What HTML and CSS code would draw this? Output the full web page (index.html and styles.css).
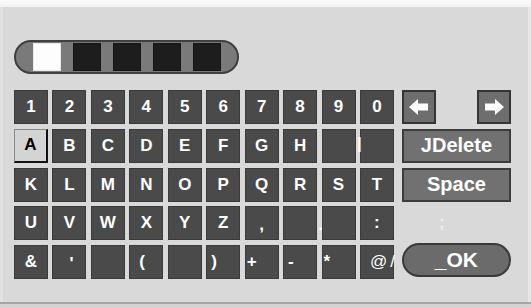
FILE: index.html
```html
<!DOCTYPE html>
<html>
<head>
<meta charset="utf-8">
<link rel="stylesheet" href="styles.css">
</head>
<body>
<div class="screen">
  <div class="topstrip"></div>
  <div class="middle">
    <div class="panel">
      <div class="progress">
        <span class="sq on"></span><span class="sq"></span><span class="sq"></span><span class="sq"></span><span class="sq"></span>
      </div>
      <div class="board">
        <div class="keys">
          <div class="key">1</div><div class="key">2</div><div class="key">3</div><div class="key">4</div><div class="key">5</div><div class="key">6</div><div class="key">7</div><div class="key">8</div><div class="key">9</div><div class="key">0</div>
          <div class="key sel">A</div><div class="key">B</div><div class="key">C</div><div class="key">D</div><div class="key">E</div><div class="key">F</div><div class="key">G</div><div class="key">H</div><div class="key"></div><div class="key start"><span class="bar">|</span></div>
          <div class="key">K</div><div class="key">L</div><div class="key">M</div><div class="key">N</div><div class="key">O</div><div class="key">P</div><div class="key">Q</div><div class="key">R</div><div class="key">S</div><div class="key">T</div>
          <div class="key">U</div><div class="key">V</div><div class="key">W</div><div class="key">X</div><div class="key">Y</div><div class="key">Z</div><div class="key low">,</div><div class="key end"><span class="dot">.</span></div><div class="key"></div><div class="key">:</div>
          <div class="key">&amp;</div><div class="key apos">'</div><div class="key"></div><div class="key start"><span class="p9">(</span></div><div class="key"></div><div class="key start"><span class="p5">)</span></div><div class="key start"><span class="p1">+</span></div><div class="key start"><span class="p5">-</span></div><div class="key start top"><span class="p1">*</span></div><div class="key start"><span class="p10">@/</span></div>
        </div>
        <div class="side">
          <div class="arrows">
            <div class="akey"><svg width="20" height="16" viewBox="0 0 20 16"><polygon points="0,8 9,0 9,4.5 19,4.5 19,11.5 9,11.5 9,16" fill="#fff"/></svg></div>
            <div class="akey"><svg width="20" height="16" viewBox="0 0 20 16"><polygon points="20,8 11,0 11,4.5 1,4.5 1,11.5 11,11.5 11,16" fill="#fff"/></svg></div>
          </div>
          <div class="wide">JDelete</div>
          <div class="wide">Space</div>
          <div class="faint">;</div>
          <div class="ok">_OK</div>
        </div>
      </div>
    </div>
    <div class="edge"></div>
  </div>
  <div class="bottom"></div>
</div>
</body>
</html>
```

FILE: styles.css
```css
html, body {
  margin: 0;
  padding: 0;
}
body {
  width: 531px;
  height: 307px;
  overflow: hidden;
  background: #d6d6d6;
  font-family: "Liberation Sans", Arial, sans-serif;
}
.screen {
  width: 531px;
  height: 307px;
  display: flex;
  flex-direction: column;
}
.topstrip {
  height: 7px;
  background: linear-gradient(#fbfbfb, #f2f2f2);
  flex: none;
}
.middle {
  height: 295px;
  display: flex;
  flex: none;
}
.panel {
  width: 517px;
  background: #d9d9d9;
  border-left: 3px solid #e1e1e1;
  padding-left: 11px;
  padding-top: 33px;
  box-sizing: content-box;
}
.edge {
  flex: 1;
  border-left: 3px solid #e7e7e7;
  background: linear-gradient(90deg, #c2c2c2 0, #c2c2c2 40%, #a2a2a2 60%, #9a9a9a 100%);
}
.bottom {
  flex: 1;
  border-top: 2px solid #a6a6a6;
  background: #d3d3d3;
}
.progress {
  width: 225px;
  height: 34px;
  box-sizing: border-box;
  border: 2px solid #3f3f3f;
  border-radius: 17px;
  background: #7a7a7a;
  display: flex;
  align-items: center;
  padding-left: 17px;
  gap: 12px;
}
.sq {
  width: 28px;
  height: 28px;
  box-sizing: border-box;
  background: #1d1d1d;
  border: 1px solid #151515;
}
.sq.on {
  background: #fdfdfd;
  border-color: #e8e8e8;
}
.board {
  margin-top: 16px;
  display: flex;
}
.keys {
  display: grid;
  grid-template-columns: repeat(10, 34px);
  grid-auto-rows: 34px;
  column-gap: 4.44px;
  row-gap: 4.75px;
}
.key {
  box-sizing: border-box;
  background: #4a4a4a;
  border: 1px solid #3a3a3a;
  color: #fff;
  font-weight: bold;
  font-size: 17px;
  display: flex;
  align-items: center;
  justify-content: center;
  white-space: nowrap;
}
.key.sel {
  background: #d4d4d4;
  color: #000;
  border-top: 1px solid #8a8a8a;
  border-left: 1px solid #8a8a8a;
  border-right: 2px solid #111;
  border-bottom: 2px solid #111;
}
.key.start {
  justify-content: flex-start;
}
.key.end {
  justify-content: flex-end;
}
.key.low {
  align-items: flex-end;
  padding-bottom: 4px;
}
.key.top {
  align-items: flex-start;
  padding-top: 6px;
}
.key.apos {
  padding-left: 4px;
  align-items: flex-start;
  padding-top: 8px;
}
.bar {
  margin-left: -4px;
  margin-top: -3px;
}
.dot {
  margin-right: -7px;
  margin-top: 4px;
}
.p1 { margin-left: 1px; }
.p5 { margin-left: 4px; }
.p9 { margin-left: 9px; }
.p10 { margin-left: 9px; font-weight: normal; font-size: 17px; letter-spacing: 3px; }
.side {
  margin-left: 8px;
  width: 109px;
  display: grid;
  grid-template-rows: repeat(5, 34px);
  row-gap: 4.75px;
}
.arrows {
  display: flex;
  justify-content: space-between;
}
.akey {
  width: 34px;
  height: 34px;
  box-sizing: border-box;
  background: #6e6e6e;
  border: 2px solid #353535;
  display: flex;
  align-items: center;
  justify-content: center;
}
.wide {
  box-sizing: border-box;
  background: #717171;
  border: 2px solid #3c3c3c;
  color: #fff;
  font-weight: bold;
  font-size: 20px;
  display: flex;
  align-items: center;
  justify-content: center;
}
.faint {
  color: #eeeeee;
  font-weight: bold;
  font-size: 17px;
  display: flex;
  align-items: center;
  padding-left: 37px;
}
.ok {
  margin-top: -2px;
  height: 34px;
  box-sizing: border-box;
  background: #6b6b6b;
  border: 2px solid #3a3a3a;
  border-radius: 17px;
  color: #fff;
  font-weight: bold;
  font-size: 21px;
  display: flex;
  align-items: center;
  justify-content: center;
}
```
